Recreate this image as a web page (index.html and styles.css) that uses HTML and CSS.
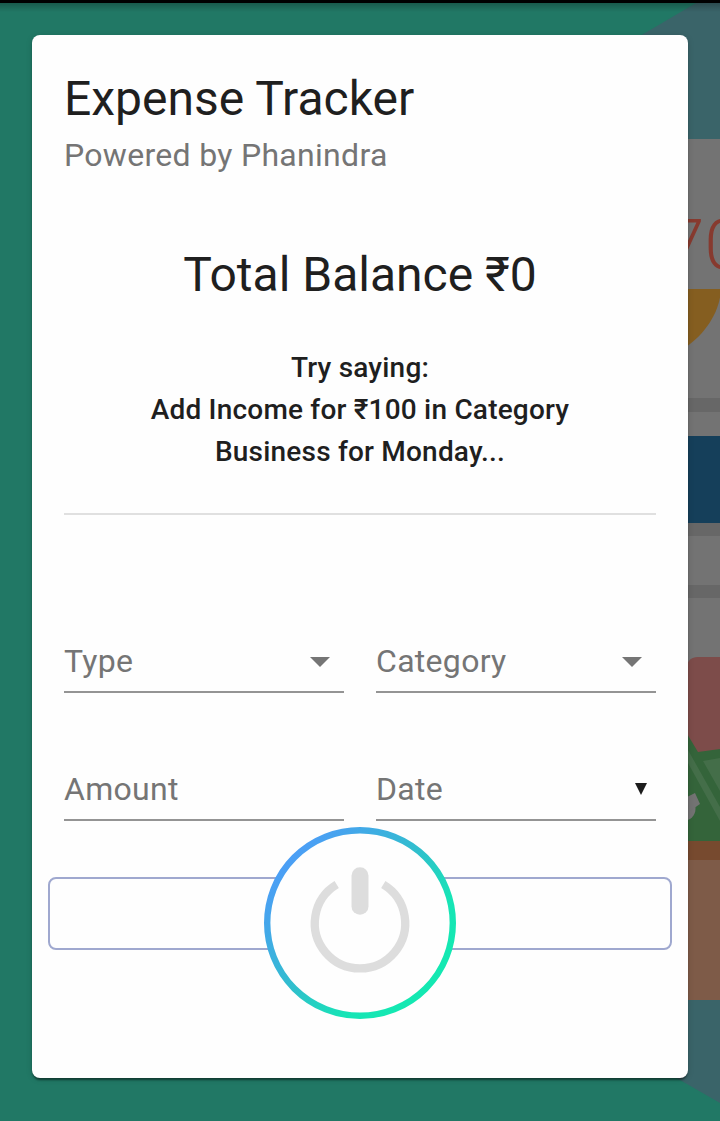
FILE: index.html
```html
<!DOCTYPE html>
<html lang="en">
<head>
<meta charset="utf-8">
<title>Expense Tracker</title>
<link rel="stylesheet" href="styles.css">
</head>
<body>
<svg class="backdrop" viewBox="0 0 720 1121" aria-hidden="true">
  <defs>
    <linearGradient id="top-shade" x1="0" y1="0" x2="0" y2="1">
      <stop offset="0" stop-color="#000" stop-opacity=".25"/>
      <stop offset="1" stop-color="#000" stop-opacity="0"/>
    </linearGradient>
  </defs>
  <rect width="720" height="1121" fill="#217865"/>
  <path d="M720 3H696L640 36V1057L720 1103Z" fill="#3a6469"/>
  <path d="M640 139H720V1000H640Z" fill="#737373"/>
  <text class="sum" x="665" y="269">70</text>
  <path d="M640 289H721C720 311 706 335 680 351Z" fill="#855e20"/>
  <path d="M640 398H720V412H640ZM640 523H720V536H640ZM640 585H720V598H640Z" fill="#676767"/>
  <path d="M640 436H720V523H640Z" fill="#153f5a"/>
  <path d="M686 672Q686 657 698 657H720V760H686Z" fill="#7d4c4a"/>
  <path d="M680 722L698 752L720 749V841H680Z" fill="#34643a"/>
  <path d="M688 750L720 807V821L688 763ZM703 761L720 758V791Z" fill="#446e49"/>
  <circle cx="684" cy="809" r="11.500" fill="#737373"/>
  <path d="M685 798L695 793L700 804L690 811Z" fill="#737373"/>
  <path d="M680 841H720V860H680Z" fill="#774a2f"/>
  <path d="M680 860H720V1000H680Z" fill="#7e5b48"/>
  <rect y="3" width="720" height="9" fill="url(#top-shade)"/>
  <rect width="720" height="3" fill="#000"/>
</svg>

<main class="card">
  <header class="header">
    <h1 class="title">Expense Tracker</h1>
    <p class="subtitle">Powered by Phanindra</p>
  </header>
  <section class="content">
    <h2 class="balance">Total Balance ₹0</h2>
    <p class="hint">Try saying:<br>Add Income for ₹100 in Category<br>Business for Monday...</p>
    <hr class="divider">
    <form class="fields">
      <div class="field"><span>Type</span><svg class="arrow" viewBox="0 0 48 48"><path d="M14 20l10 10 10-10z"/></svg></div>
      <div class="field"><span>Category</span><svg class="arrow" viewBox="0 0 48 48"><path d="M14 20l10 10 10-10z"/></svg></div>
      <div class="field"><span>Amount</span></div>
      <div class="field"><span>Date</span><svg class="date-arrow" viewBox="0 0 12 12"><path d="M0 0H12L6 12Z"/></svg></div>
    </form>
  </section>
  <div class="actions">
    <button class="create" type="button" aria-label="Create"></button>
    <svg class="voice" viewBox="0 0 192 192" role="img" aria-label="Voice input">
      <defs>
        <linearGradient id="ring" x1="30" y1="30" x2="162" y2="150" gradientUnits="userSpaceOnUse">
          <stop offset="0" stop-color="#4b9ff5"/>
          <stop offset=".12" stop-color="#45a5ec"/>
          <stop offset=".5" stop-color="#2fc0cc"/>
          <stop offset=".8" stop-color="#17e4b6"/>
          <stop offset="1" stop-color="#14e8b2"/>
        </linearGradient>
      </defs>
      <circle cx="96" cy="96" r="92.800" fill="#fefefe" stroke="url(#ring)" stroke-width="6.400"/>
      <path d="M72.700 57.500A45.200 45.200 0 1 0 119.300 57.500" fill="none" stroke="#ddd" stroke-width="8.300"/>
      <path d="M96 48.800V79.200" fill="none" stroke="#ddd" stroke-width="17" stroke-linecap="round"/>
    </svg>
  </div>
</main>
</body>
</html>
```
FILE: styles.css
```css
* {
  box-sizing: border-box;
}

body {
  margin: 0;
  height: 1121px;
  padding: 35px 32px 43px;
  overflow: hidden;
  font-family: Roboto, "Liberation Sans", sans-serif;
  color: #1f1f1f;
}

.backdrop {
  position: absolute;
  inset: 0;
  width: 720px;
  height: 1121px;
  z-index: -1;
}

.sum {
  font-size: 71px;
  font-weight: 300;
  fill: #873a2f;
}

.card {
  height: 1043px;
  background: #fefefe;
  border-radius: 8px;
  box-shadow: 0 4px 2px -2px rgba(0, 0, 0, .3), 0 2px 2px rgba(0, 0, 0, .2), 0 1px 6px rgba(0, 0, 0, .15);
}

.header {
  padding: 32px;
}

.title,
.balance {
  margin: 0;
  font-size: 48px;
  line-height: 64px;
  font-weight: 400;
}

.subtitle {
  margin: 0;
  font-size: 32px;
  line-height: 48px;
  letter-spacing: .3px;
  color: #757575;
}

.content {
  padding: 0 32px;
}

.balance {
  margin-top: 32px;
  text-align: center;
}

.hint {
  margin: 40px 0 0;
  font-size: 28px;
  line-height: 42px;
  font-weight: 500;
  letter-spacing: .2px;
  text-align: center;
}

.divider {
  height: 2px;
  margin: 40px 0 0;
  border: 0;
  background: #e0e0e0;
}

.fields {
  display: grid;
  grid-template-columns: 1fr 1fr;
  gap: 64px 32px;
  margin-top: 114px;
}

.field {
  display: flex;
  align-items: center;
  justify-content: space-between;
  height: 64px;
  padding-top: 2px;
  border-bottom: 2px solid #949494;
  font-size: 32px;
  letter-spacing: .3px;
  color: #757575;
}

.arrow {
  width: 48px;
  height: 48px;
  fill: #757575;
}

.date-arrow {
  width: 12px;
  height: 12px;
  margin-right: 9px;
  fill: #1c1c1c;
}

.actions {
  display: grid;
  align-items: center;
  justify-items: center;
  margin: 6px 16px 0;
}

.create,
.voice {
  grid-area: 1 / 1;
}

.create {
  width: 100%;
  height: 73px;
  margin-bottom: 19px;
  padding: 0;
  background: transparent;
  border: 2px solid #9fa8cf;
  border-radius: 8px;
}

.voice {
  width: 192px;
  height: 192px;
}
```
